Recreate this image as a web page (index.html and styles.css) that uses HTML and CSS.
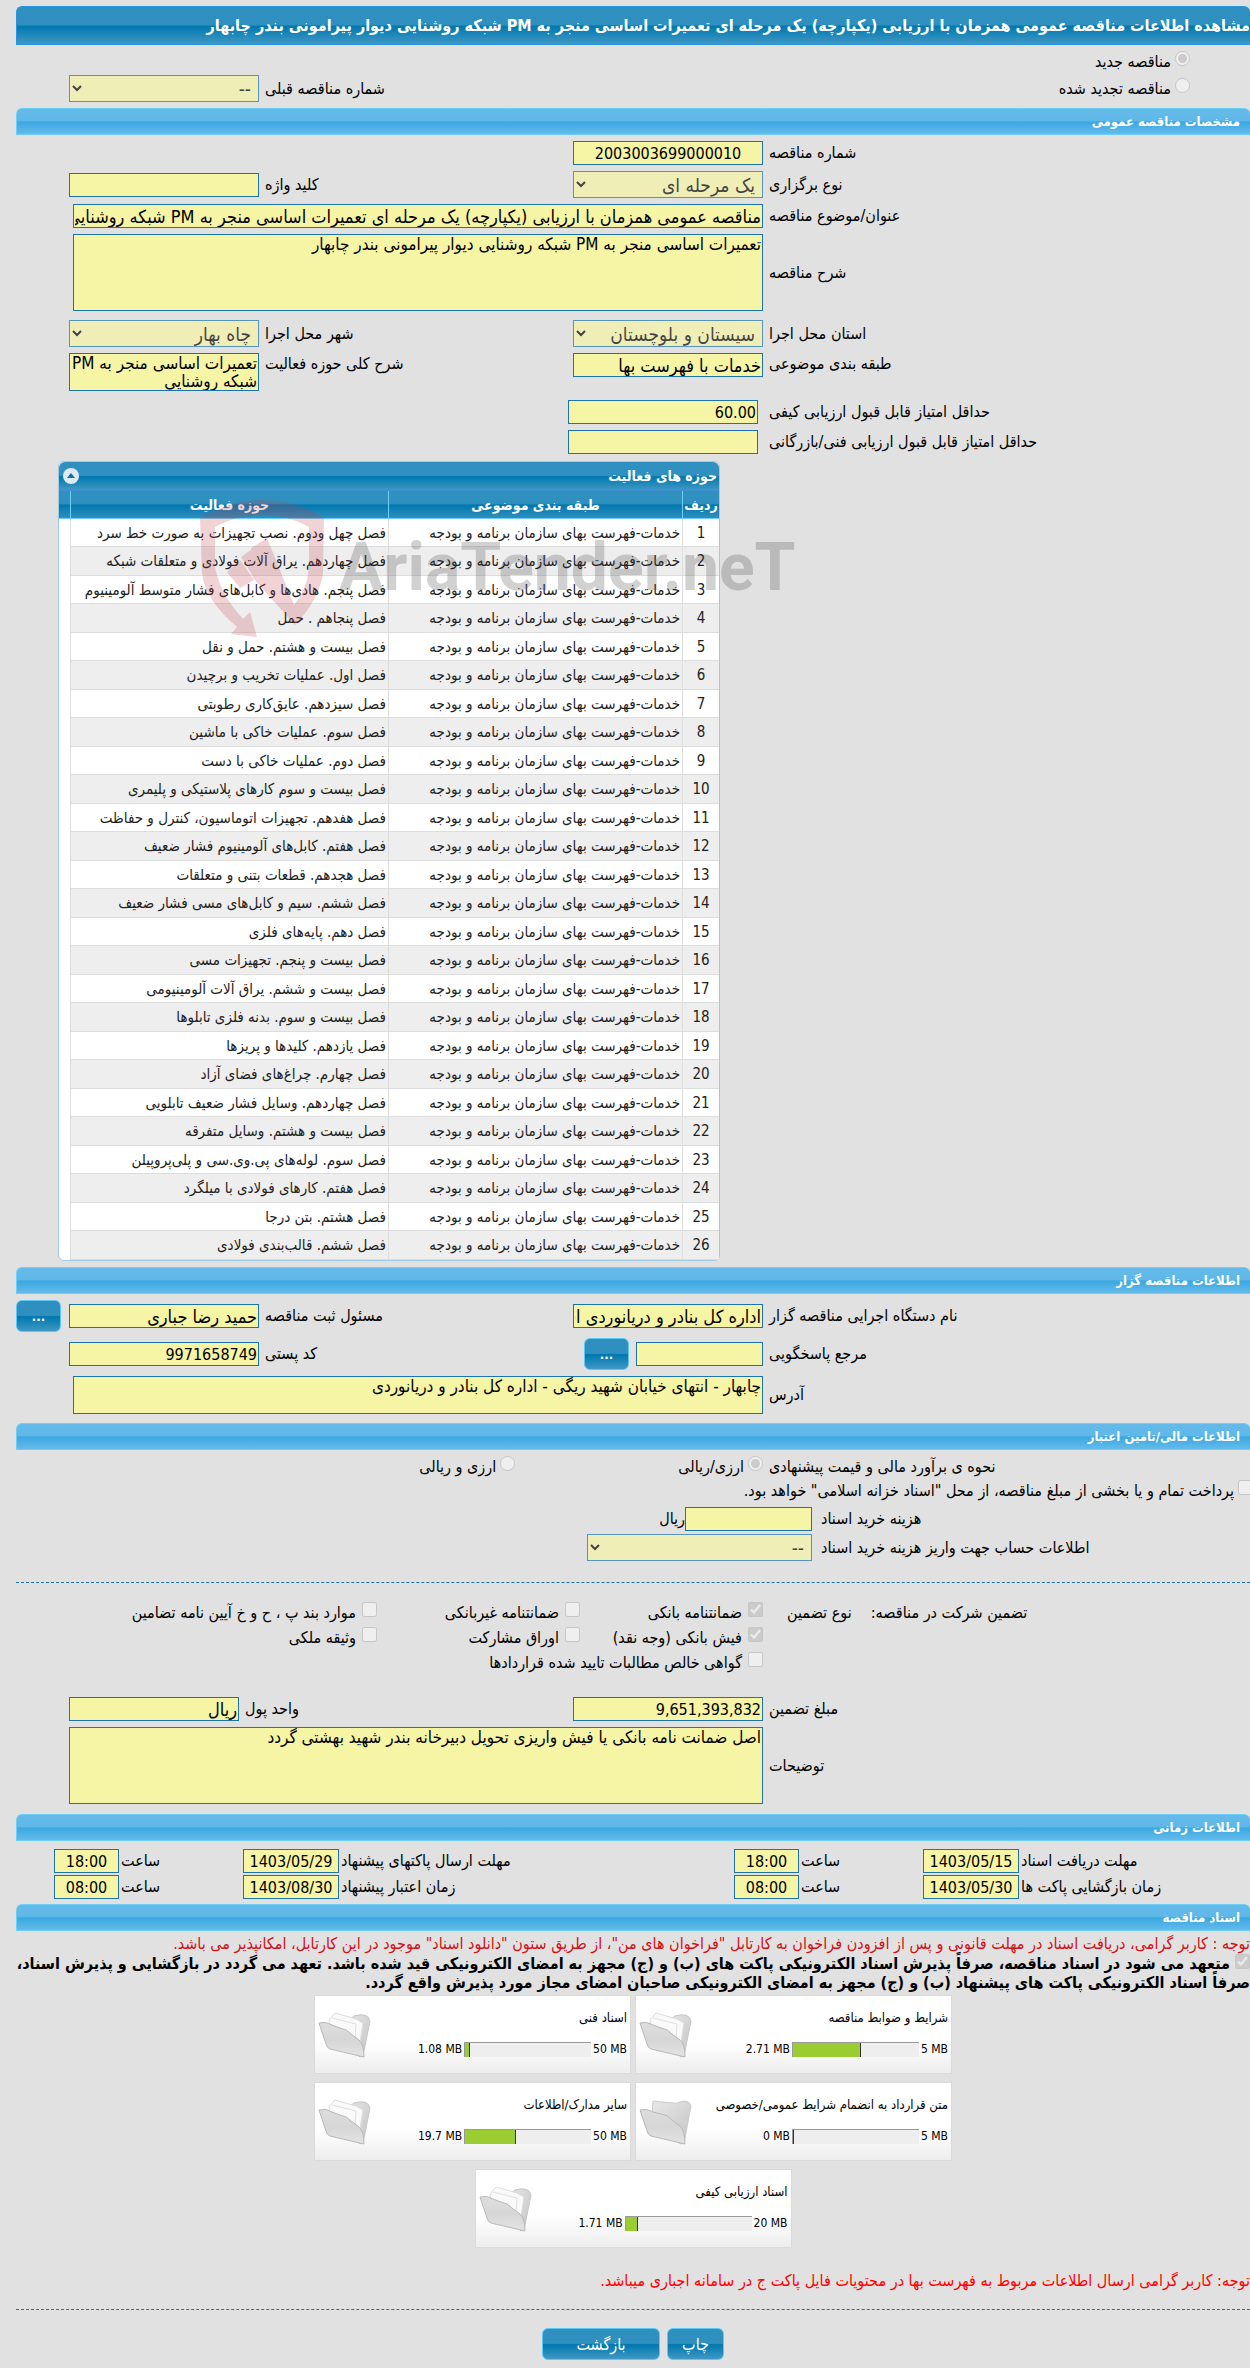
FILE: index.html
```html
<!DOCTYPE html>
<html lang="fa" dir="rtl">
<head>
    <meta charset="utf-8">
    <title>مشاهده اطلاعات مناقصه عمومی</title>
    <link rel="stylesheet" href="styles.css">
</head>

<body>
    <!-- shared folder shapes -->
    <svg class="defs" width="0" height="0">
        <defs>
            <linearGradient id="gBack" x1="0" y1="0" x2="1" y2="1">
                <stop offset="0" stop-color="#e8e8e8"/>
                <stop offset="1" stop-color="#c4c4c4"/>
            </linearGradient>
            <linearGradient id="gFront" x1="0" y1="0" x2="0" y2="1">
                <stop offset="0" stop-color="#dedede"/>
                <stop offset="0.5" stop-color="#d6d6d6"/>
                <stop offset="1" stop-color="#e4e4e4"/>
            </linearGradient>
        </defs>
        <symbol id="folder" viewBox="0 0 54 48">
            <path d="M14 3 L34 5 Q38 6 41 4 Q50 1 52 8 L46 40 Q45 46 42 46 L12 30 Z" fill="url(#gBack)" stroke="#cbcbcb"/>
            <path d="M1 12 Q8 10 14 14 L22 16 Q29 17 33 22 L41 28 Q46 32 46 46 L12 38 Q9 37 8 33 Z" fill="url(#gFront)" stroke="#b8b8b8"/>
        </symbol>
        <symbol id="folder-full" viewBox="0 0 54 48">
            <path d="M32 8 L36 5 Q50 1 52 10 L46 40 Q45 46 42 46 L24 30 Z" fill="url(#gBack)" stroke="#c6c6c6"/>
            <path d="M11 9 L17 2 L38 8 L45 12 L41 38 L12 20 Z" fill="#fafafa" stroke="#dcdcdc"/>
            <path d="M14 7 L38 13 L37 28" fill="none" stroke="#e0e0e0"/>
            <path d="M1 12 Q8 10 14 14 L22 17 Q29 18 33 23 L41 29 Q46 33 46 46 L12 38 Q9 37 8 33 Z" fill="url(#gFront)" stroke="#b8b8b8"/>
        </symbol>
    </svg>

    <main class="page">
        <h1 class="title-bar">مشاهده اطلاعات مناقصه عمومی همزمان با ارزیابی (یکپارچه) یک مرحله ای تعمیرات اساسی منجر به PM شبکه روشنایی دیوار پیرامونی بندر چابهار</h1>

        <section class="kind">
            <div class="kind-row">
                <label class="opt"><input type="radio" name="kind" checked disabled>مناقصه جدید</label>
            </div>
            <div class="kind-row">
                <label class="opt"><input type="radio" name="kind" disabled>مناقصه تجدید شده</label>
                <label class="lbl" for="prev">شماره مناقصه قبلی</label>
                <select id="prev" disabled><option>--</option></select>
            </div>
        </section>

        <h2 class="bar">مشخصات مناقصه عمومی</h2>
        <section class="form">
            <div class="row">
                <label class="lbl" for="num">شماره مناقصه</label>
                <input class="num center" id="num" type="text" value="2003003699000010" readonly>
            </div>
            <div class="row">
                <label class="lbl" for="type">نوع برگزاری</label>
                <select id="type" disabled><option>یک مرحله ای</option></select>
                <label class="lbl" for="key">کلید واژه</label>
                <input id="key" type="text" readonly>
            </div>
            <div class="row">
                <label class="lbl" for="subject">عنوان/موضوع مناقصه</label>
                <input class="wide" id="subject" type="text" value="مناقصه عمومی همزمان با ارزیابی (یکپارچه) یک مرحله ای تعمیرات اساسی منجر به PM شبکه روشنایی دیوار پیرامونی بندر چابهار" readonly>
            </div>
            <div class="row">
                <label class="lbl" for="desc">شرح مناقصه</label>
                <textarea class="wide tall" id="desc" readonly>تعمیرات اساسی منجر به PM شبکه روشنایی دیوار پیرامونی بندر چابهار</textarea>
            </div>
            <div class="row gap-top">
                <label class="lbl" for="province">استان محل اجرا</label>
                <select id="province" disabled><option>سیستان و بلوچستان</option></select>
                <label class="lbl" for="city">شهر محل اجرا</label>
                <select id="city" disabled><option>چاه بهار</option></select>
            </div>
            <div class="row top">
                <label class="lbl" for="cat">طبقه بندی موضوعی</label>
                <input id="cat" type="text" value="خدمات با فهرست بها" readonly>
                <label class="lbl" for="scope">شرح کلی حوزه فعالیت</label>
                <textarea id="scope" readonly>تعمیرات اساسی منجر به PM شبکه روشنایی</textarea>
            </div>
            <div class="row score gap-top">
                <label class="lbl" for="q1">حداقل امتیاز قابل قبول ارزیابی کیفی</label>
                <input class="num" id="q1" type="text" value="60.00" readonly>
            </div>
            <div class="row score">
                <label class="lbl" for="q2">حداقل امتیاز قابل قبول ارزیابی فنی/بازرگانی</label>
                <input class="num" id="q2" type="text" readonly>
            </div>
        </section>

        <section class="panel">
            <div class="panel-title">
                <h3>حوزه های فعالیت</h3>
                <button class="collapse" type="button" aria-label="بستن">
                    <svg viewBox="0 0 16 16" width="16" height="16"><circle cx="8" cy="8" r="8" fill="#dfe9f5"/><path d="M4 10 L8 5 L12 10 Z" fill="#0f6fa5"/></svg>
                </button>
            </div>
            <table class="grid">
                <colgroup><col class="c-num"><col class="c-cat"><col><col class="c-end"></colgroup>
                <thead>
                    <tr><th>ردیف</th><th>طبقه بندی موضوعی</th><th>حوزه فعالیت</th><th></th></tr>
                </thead>
                <tbody>
                    <tr><td>1</td><td>خدمات-فهرست بهای سازمان برنامه و بودجه</td><td>فصل چهل ودوم. نصب تجهیزات به صورت خط سرد</td><td></td></tr>
                    <tr><td>2</td><td>خدمات-فهرست بهای سازمان برنامه و بودجه</td><td>فصل چهاردهم. یراق آلات فولادی و متعلقات شبکه</td><td></td></tr>
                    <tr><td>3</td><td>خدمات-فهرست بهای سازمان برنامه و بودجه</td><td>فصل پنجم. هادی‌ها و کابل‌های فشار متوسط آلومینیوم</td><td></td></tr>
                    <tr><td>4</td><td>خدمات-فهرست بهای سازمان برنامه و بودجه</td><td>فصل پنجاهم . حمل</td><td></td></tr>
                    <tr><td>5</td><td>خدمات-فهرست بهای سازمان برنامه و بودجه</td><td>فصل بیست و هشتم. حمل و نقل</td><td></td></tr>
                    <tr><td>6</td><td>خدمات-فهرست بهای سازمان برنامه و بودجه</td><td>فصل اول. عملیات تخریب و برچیدن</td><td></td></tr>
                    <tr><td>7</td><td>خدمات-فهرست بهای سازمان برنامه و بودجه</td><td>فصل سیزدهم. عایق‌کاری رطوبتی</td><td></td></tr>
                    <tr><td>8</td><td>خدمات-فهرست بهای سازمان برنامه و بودجه</td><td>فصل سوم. عملیات خاکی با ماشین</td><td></td></tr>
                    <tr><td>9</td><td>خدمات-فهرست بهای سازمان برنامه و بودجه</td><td>فصل دوم. عملیات خاکی با دست</td><td></td></tr>
                    <tr><td>10</td><td>خدمات-فهرست بهای سازمان برنامه و بودجه</td><td>فصل بیست و سوم کارهای پلاستیکی و پلیمری</td><td></td></tr>
                    <tr><td>11</td><td>خدمات-فهرست بهای سازمان برنامه و بودجه</td><td>فصل هفدهم. تجهیزات اتوماسیون، کنترل و حفاظت</td><td></td></tr>
                    <tr><td>12</td><td>خدمات-فهرست بهای سازمان برنامه و بودجه</td><td>فصل هفتم. کابل‌های آلومینیوم فشار ضعیف</td><td></td></tr>
                    <tr><td>13</td><td>خدمات-فهرست بهای سازمان برنامه و بودجه</td><td>فصل هجدهم. قطعات بتنی و متعلقات</td><td></td></tr>
                    <tr><td>14</td><td>خدمات-فهرست بهای سازمان برنامه و بودجه</td><td>فصل ششم. سیم و کابل‌های مسی فشار ضعیف</td><td></td></tr>
                    <tr><td>15</td><td>خدمات-فهرست بهای سازمان برنامه و بودجه</td><td>فصل دهم. پایه‌های فلزی</td><td></td></tr>
                    <tr><td>16</td><td>خدمات-فهرست بهای سازمان برنامه و بودجه</td><td>فصل بیست و پنجم. تجهیزات مسی</td><td></td></tr>
                    <tr><td>17</td><td>خدمات-فهرست بهای سازمان برنامه و بودجه</td><td>فصل بیست و ششم. یراق آلات آلومینیومی</td><td></td></tr>
                    <tr><td>18</td><td>خدمات-فهرست بهای سازمان برنامه و بودجه</td><td>فصل بیست و سوم. بدنه فلزی تابلوها</td><td></td></tr>
                    <tr><td>19</td><td>خدمات-فهرست بهای سازمان برنامه و بودجه</td><td>فصل یازدهم. کلیدها و پریزها</td><td></td></tr>
                    <tr><td>20</td><td>خدمات-فهرست بهای سازمان برنامه و بودجه</td><td>فصل چهارم. چراغ‌های فضای آزاد</td><td></td></tr>
                    <tr><td>21</td><td>خدمات-فهرست بهای سازمان برنامه و بودجه</td><td>فصل چهاردهم. وسایل فشار ضعیف تابلویی</td><td></td></tr>
                    <tr><td>22</td><td>خدمات-فهرست بهای سازمان برنامه و بودجه</td><td>فصل بیست و هشتم. وسایل متفرقه</td><td></td></tr>
                    <tr><td>23</td><td>خدمات-فهرست بهای سازمان برنامه و بودجه</td><td>فصل سوم. لوله‌های پی.وی.سی و پلی‌پروپیلن</td><td></td></tr>
                    <tr><td>24</td><td>خدمات-فهرست بهای سازمان برنامه و بودجه</td><td>فصل هفتم. کارهای فولادی با میلگرد</td><td></td></tr>
                    <tr><td>25</td><td>خدمات-فهرست بهای سازمان برنامه و بودجه</td><td>فصل هشتم. بتن درجا</td><td></td></tr>
                    <tr><td>26</td><td>خدمات-فهرست بهای سازمان برنامه و بودجه</td><td>فصل ششم. قالب‌بندی فولادی</td><td></td></tr>
                </tbody>
            </table>
            <!-- watermark over the table -->
            <div class="mark" dir="ltr">
                <svg viewBox="0 0 125 140" width="125" height="140">
                    <g fill="#c83c46">
                        <path d="M0 20 Q30 2 62 2 Q95 2 124 20 L123 75 Q119 102 95 127 L53 80 L51 50 L67 40 L94 107 Q107 92 109 70 L109 29 Q88 17 62 17 Q36 17 15 29 L15 69 Q20 96 43 121 L50 114 L57 139 L31 136 L37 129 Q5 102 2 75 Z"/>
                        <path d="M27 74 L40 62 L54 82 L40 90 Z M41 59 L52 51 L70 72 L54 80 Z"/>
                    </g>
                </svg>
                <span>AriaTender.neT</span>
            </div>
        </section>

        <h2 class="bar">اطلاعات مناقصه گزار</h2>
        <section class="form owner">
            <div class="row">
                <label class="lbl" for="org">نام دستگاه اجرایی مناقصه گزار</label>
                <input id="org" type="text" value="اداره کل بنادر و دریانوردی استان سیستان و بلوچستان" readonly>
                <label class="lbl" for="resp">مسئول ثبت مناقصه</label>
                <input id="resp" type="text" value="حمید رضا جباری" readonly>
                <button class="btn dots" type="button">...</button>
            </div>
            <div class="row">
                <label class="lbl" for="ref">مرجع پاسخگویی</label>
                <div class="pair">
                    <input id="ref" type="text" readonly>
                    <button class="btn dots" type="button">...</button>
                </div>
                <label class="lbl" for="zip">کد پستی</label>
                <input class="num" id="zip" type="text" value="9971658749" readonly>
            </div>
            <div class="row">
                <label class="lbl" for="addr">آدرس</label>
                <textarea class="wide" id="addr" readonly>چابهار - انتهای خیابان شهید ریگی - اداره کل بنادر و دریانوردی</textarea>
            </div>
        </section>

        <h2 class="bar">اطلاعات مالی/تامین اعتبار</h2>
        <section class="money">
            <div class="row top">
                <span class="lbl">نحوه ی برآورد مالی و قیمت پیشنهادی</span>
                <div class="currency">
                    <label class="opt"><input type="radio" name="cur" checked disabled>ارزی/ریالی</label>
                    <label class="opt"><input type="radio" name="cur" disabled>ارزی و ریالی</label>
                </div>
            </div>
            <label class="opt treasury"><input type="checkbox" disabled>پرداخت تمام و یا بخشی از مبلغ مناقصه، از محل "اسناد خزانه اسلامی" خواهد بود.</label>
            <div class="cost">
                <label class="lbl" for="fee">هزینه خرید اسناد</label>
                <div class="fee"><input id="fee" type="text" readonly><span>ریال</span></div>
            </div>
            <div class="cost">
                <label class="lbl" for="acc">اطلاعات حساب جهت واریز هزینه خرید اسناد</label>
                <select id="acc" disabled><option>--</option></select>
            </div>
        </section>

        <hr class="dash">

        <section class="guarantee">
            <div class="g-head">
                <span>تضمین شرکت در مناقصه:</span>
                <span>نوع تضمین</span>
            </div>
            <div class="g-list">
                <label class="opt"><input type="checkbox" checked disabled>ضمانتنامه بانکی</label>
                <label class="opt"><input type="checkbox" disabled>ضمانتنامه غیربانکی</label>
                <label class="opt"><input type="checkbox" disabled>موارد بند پ ، ح و خ آیین نامه تضامین</label>
                <label class="opt"><input type="checkbox" checked disabled>فیش بانکی (وجه نقد)</label>
                <label class="opt"><input type="checkbox" disabled>اوراق مشارکت</label>
                <label class="opt"><input type="checkbox" disabled>وثیقه ملکی</label>
                <label class="opt all"><input type="checkbox" disabled>گواهی خالص مطالبات تایید شده قراردادها</label>
            </div>
        </section>
        <section class="form notes">
            <div class="row unit">
                <label class="lbl" for="amount">مبلغ تضمین</label>
                <input class="num" id="amount" type="text" value="9,651,393,832" readonly>
                <label class="lbl" for="unit">واحد پول</label>
                <input id="unit" type="text" value="ریال" readonly>
            </div>
            <div class="row">
                <label class="lbl" for="note">توضیحات</label>
                <textarea class="wide tall" id="note" readonly>اصل ضمانت نامه بانکی یا فیش واریزی تحویل دبیرخانه بندر شهید بهشتی گردد</textarea>
            </div>
        </section>

        <h2 class="bar">اطلاعات زمانی</h2>
        <section class="times">
            <div class="time">
                <label class="lbl" for="d1">مهلت دریافت اسناد</label>
                <input class="num" id="d1" type="text" value="1403/05/15" readonly>
                <label class="lbl" for="t1">ساعت</label>
                <input class="num" id="t1" type="text" value="18:00" readonly>
            </div>
            <div class="time">
                <label class="lbl" for="d2">مهلت ارسال پاکتهای پیشنهاد</label>
                <input class="num" id="d2" type="text" value="1403/05/29" readonly>
                <label class="lbl" for="t2">ساعت</label>
                <input class="num" id="t2" type="text" value="18:00" readonly>
            </div>
            <div class="time">
                <label class="lbl" for="d3">زمان بازگشایی پاکت ها</label>
                <input class="num" id="d3" type="text" value="1403/05/30" readonly>
                <label class="lbl" for="t3">ساعت</label>
                <input class="num" id="t3" type="text" value="08:00" readonly>
            </div>
            <div class="time">
                <label class="lbl" for="d4">زمان اعتبار پیشنهاد</label>
                <input class="num" id="d4" type="text" value="1403/08/30" readonly>
                <label class="lbl" for="t4">ساعت</label>
                <input class="num" id="t4" type="text" value="08:00" readonly>
            </div>
        </section>

        <h2 class="bar">اسناد مناقصه</h2>
        <p class="warn">توجه : کاربر گرامی، دریافت اسناد در مهلت قانونی و پس از افزودن فراخوان به کارتابل "فراخوان های من"، از طریق ستون "دانلود اسناد" موجود در این کارتابل، امکانپذیر می باشد.</p>
        <label class="commit"><input type="checkbox" checked disabled>متعهد می شود در اسناد مناقصه، صرفاً پذیرش اسناد الکترونیکی پاکت های (ب) و (ج) مجهز به امضای الکترونیکی قید شده باشد. تعهد می گردد در بازگشایی و پذیرش اسناد،<br>صرفاً اسناد الکترونیکی پاکت های پیشنهاد (ب) و (ج) مجهز به امضای الکترونیکی صاحبان امضای مجاز مورد پذیرش واقع گردد.</label>

        <section class="docs">
            <article class="doc">
                <h4>شرایط و ضوابط مناقصه</h4>
                <div class="size"><span>5 MB</span><div class="meter"><div class="fill" style="width:54.2%"></div></div><span>2.71 MB</span></div>
                <svg class="folder"><use href="#folder-full"/></svg>
            </article>
            <article class="doc">
                <h4>اسناد فنی</h4>
                <div class="size"><span>50 MB</span><div class="meter"><div class="fill" style="width:4%"></div></div><span>1.08 MB</span></div>
                <svg class="folder"><use href="#folder-full"/></svg>
            </article>
            <article class="doc">
                <h4>متن قرارداد به انضمام شرایط عمومی/خصوصی</h4>
                <div class="size"><span>5 MB</span><div class="meter"><div class="fill" style="width:0%"></div></div><span>0 MB</span></div>
                <svg class="folder"><use href="#folder"/></svg>
            </article>
            <article class="doc">
                <h4>سایر مدارک/اطلاعات</h4>
                <div class="size"><span>50 MB</span><div class="meter"><div class="fill" style="width:40%"></div></div><span>19.7 MB</span></div>
                <svg class="folder"><use href="#folder-full"/></svg>
            </article>
            <article class="doc">
                <h4>اسناد ارزیابی کیفی</h4>
                <div class="size"><span>20 MB</span><div class="meter"><div class="fill" style="width:10%"></div></div><span>1.71 MB</span></div>
                <svg class="folder"><use href="#folder-full"/></svg>
            </article>
        </section>

        <p class="warn last">توجه: کاربر گرامی ارسال اطلاعات مربوط به فهرست بها در محتویات فایل پاکت ج در سامانه اجباری میباشد.</p>
        <hr class="dash">
        <div class="actions">
            <button class="btn" type="button">چاپ</button>
            <button class="btn back" type="button">بازگشت</button>
        </div>
    </main>
</body>

</html>
```
FILE: styles.css
```css
* {
    box-sizing: border-box;
}

body {
    margin: 0;
    background: #e1e1e1;
    color: #000;
    font-family: "DejaVu Sans Condensed", "DejaVu Sans", Tahoma, sans-serif;
    font-size: 16px;
    line-height: 22px;
}

.defs {
    position: absolute;
}

.page {
    padding: 6px 0 6px 16px;
    overflow: hidden;
}

h1, h2, h3, h4, p {
    margin: 0;
}

/* bars */
.title-bar {
    height: 39px;
    line-height: 37px;
    border: 1px solid #2a93df;
    border-right: none;
    border-radius: 6px 6px 0 0;
    background: linear-gradient(#3090bf 0%, #2f8fbe 48%, #0078b0 52%, #3f98c4 100%);
    color: #fff;
    font-size: 16px;
    white-space: nowrap;
}

.bar {
    height: 27px;
    line-height: 26px;
    padding: 0 10px;
    border: 1px solid #6dcff6;
    border-right: none;
    border-radius: 6px 6px 0 0;
    background: linear-gradient(#64bbea 0%, #60b8e8 46%, #3ba8e2 52%, #64bbea 100%);
    color: #fff;
    font-size: 13px;
}

/* fields */
input[type="text"], textarea, select {
    width: 100%;
    height: 24px;
    margin: 0;
    padding: 0 1px;
    border: 1px solid #1c74aa;
    border-radius: 0;
    background: #f6f4a5;
    color: #000;
    font-family: inherit;
    font-size: 18px;
    outline: none;
}

input[type="text"].num {
    font-size: 16px;
}

select {
    height: 27px;
    padding: 0 3px;
    font-size: 19px;
}

textarea {
    display: block;
    height: 38px;
    font-size: 17px;
    line-height: 18px;
    overflow: hidden;
    resize: none;
}

input.center {
    text-align: center;
}

input[type="radio"], input[type="checkbox"] {
    width: 15px;
    height: 15px;
    margin: 0;
    flex: none;
}

.opt {
    display: flex;
    align-items: flex-start;
    gap: 4px;
    white-space: nowrap;
}

.lbl {
    padding-left: 6px;
    text-align: left;
    white-space: nowrap;
}

/* label / field / label / field / side column */
.row, .kind-row {
    display: grid;
    grid-template-columns: 487fr 190px 314fr 190px 53px;
    align-items: center;
}

.form .wide {
    grid-column: 2 / 5;
    width: calc(100% - 4px);
}

.form .tall {
    height: 77px;
}

.kind {
    padding: 6px 0;
}

.kind-row:first-child {
    height: 24px;
    align-items: start;
}

.kind-row .opt {
    padding-right: 60px;
}

.kind-row .lbl {
    grid-column: 3;
}

.form {
    display: flex;
    flex-direction: column;
    gap: 6px;
    padding: 6px 0 7px;
}

.gap-top {
    margin-top: 3px;
}

.row.top {
    align-items: start;
}

.row.score {
    grid-template-columns: 492fr 190px 552fr;
}

.row.score .lbl {
    padding-left: 11px;
}

/* activity table */
.panel {
    position: relative;
    margin: 0 530px 6px 42px;
    border: 1px solid #a3c8e2;
    border-radius: 6px;
    background: #fff;
}

.panel-title {
    display: flex;
    justify-content: space-between;
    align-items: center;
    height: 29px;
    padding: 0 2px 0 4px;
    border-bottom: 1px solid #3d8fd2;
    border-radius: 6px 6px 0 0;
    background: linear-gradient(#3090bf 0%, #2f8fbe 48%, #0078b0 52%, #3f98c4 100%);
    color: #fff;
}

.panel-title h3 {
    font-size: 14px;
}

.collapse {
    width: 16px;
    height: 16px;
    padding: 0;
    border: none;
    background: none;
    line-height: 0;
}

.grid {
    width: 100%;
    table-layout: fixed;
    border-collapse: separate;
    border-spacing: 0;
    font-size: 15px;
    line-height: 20px;
}

.c-num {
    width: 37px;
}

.c-cat {
    width: 294px;
}

.c-end {
    width: 11px;
}

.grid th {
    height: 28px;
    padding: 0;
    border-left: 1px solid #6dcff6;
    border-bottom: 1px solid #6dcff6;
    background: linear-gradient(#3090bf 0%, #2f8fbe 46%, #0078b0 52%, #2f8fbe 100%);
    color: #fff;
    font-size: 14px;
    white-space: nowrap;
}

.grid td {
    height: 28px;
    padding: 0 2px;
    border-left: 1px solid #ddd;
    border-bottom: 1px solid #ddd;
    color: #222;
    white-space: nowrap;
}

.grid tbody tr:nth-child(even) td {
    height: 29px;
    background: #eee;
}

.grid td:first-child {
    text-align: center;
}

.grid th:last-child {
    border-left: none;
}

.grid tbody tr td:last-child, .grid tbody tr:nth-child(even) td:last-child {
    border: none;
    border-radius: 0 0 0 6px;
    background: #fff;
}

.mark {
    position: absolute;
    top: 36px;
    left: 141px;
    display: flex;
    align-items: center;
    gap: 14px;
    opacity: 0.22;
    pointer-events: none;
}

.mark span {
    color: #333;
    font-family: Roboto, sans-serif;
    font-size: 66px;
    font-weight: bold;
    line-height: 80px;
}

/* buttons */
.btn {
    min-width: 57px;
    height: 32px;
    padding: 0 14px;
    border: 1px solid #5cc8f5;
    border-radius: 6px;
    background: linear-gradient(#2f8fbe 0%, #2f8fbe 48%, #0078b0 52%, #3f98c4 100%);
    color: #fff;
    font-family: inherit;
    font-size: 16px;
}

.btn.dots {
    width: 45px;
    min-width: 0;
    padding: 0;
    font-size: 13px;
    font-weight: bold;
}

.owner .dots {
    justify-self: end;
}

.pair {
    display: flex;
    align-items: center;
    gap: 7px;
}

.pair input[type="text"] {
    width: 127px;
}

.owner {
    padding-bottom: 9px;
}

/* money */
.money {
    padding: 6px 0 18px;
}

.currency {
    grid-column: 2 / 5;
    display: flex;
    gap: 163px;
}

.treasury {
    margin: 2px -3px 5px 0;
}

.cost {
    display: grid;
    grid-template-columns: 438fr 225px 571fr;
    align-items: center;
    margin-bottom: 3px;
}

.cost .lbl {
    padding-left: 9px;
}

.fee {
    display: flex;
    align-items: center;
}

.fee input[type="text"] {
    width: 127px;
}

.dash {
    margin: 0;
    border: none;
    border-top: 1px dashed #1c74aa;
}

/* guarantee */
.guarantee {
    display: grid;
    grid-template-columns: 487fr 747fr;
    padding: 19px 0 23px;
}

.g-head {
    display: flex;
    justify-content: flex-end;
    gap: 19px;
    padding-left: 24px;
}

.g-list {
    display: grid;
    grid-template-columns: 183px 203px 1fr;
    row-gap: 3px;
}

.g-list .opt {
    gap: 6px;
}

.g-list .all {
    grid-column: 1 / 4;
}

.notes {
    padding: 0 0 10px;
}

.notes .wide {
    width: 100%;
}

.row.unit {
    grid-template-columns: 487fr 190px 334fr 170px 53px;
}

/* times */
.times {
    display: grid;
    grid-template-columns: 554fr 680fr;
    row-gap: 2px;
    padding: 8px 0 5px;
}

.time {
    display: grid;
    grid-template-columns: 1fr 96px 124px 65px 38px;
    align-items: center;
}

.time .lbl {
    padding-left: 2px;
}

.time input {
    text-align: center;
}

/* documents */
.warn {
    padding-top: 3px;
    color: #d40f16;
    line-height: 20px;
}

.commit {
    display: block;
    font-size: 16px;
    font-weight: bold;
    line-height: 19px;
    white-space: nowrap;
}

.commit input[type="checkbox"] {
    margin-left: 5px;
    vertical-align: top;
}

.docs {
    display: grid;
    grid-template-columns: 317px 317px;
    justify-content: center;
    gap: 8px 4px;
    margin-top: 3px;
}

.doc {
    display: grid;
    grid-template-columns: 1fr 60px;
    grid-template-rows: 43px 34px;
    padding: 0 3px;
    border: 1px solid #dadada;
    background: linear-gradient(#fff 60%, #ededed);
    font-size: 12px;
    line-height: 20px;
}

.doc:last-child {
    grid-column: 1 / 3;
    justify-self: center;
    width: 317px;
}

.doc h4 {
    grid-column: 1 / 3;
    grid-row: 1;
    padding-top: 12px;
    font-size: 13px;
    font-weight: normal;
}

.doc .folder {
    grid-column: 2;
    grid-row: 1 / 3;
    align-self: center;
    justify-self: end;
    width: 54px;
    height: 48px;
}

.size {
    grid-column: 1;
    grid-row: 2;
    display: flex;
    gap: 2px;
}

.size span {
    direction: ltr;
}

.meter {
    display: flex;
    justify-content: flex-end;
    width: 127px;
    height: 15px;
    margin-top: 3px;
    border-top: 1px solid #999;
    border-left: 1px solid #999;
    background: #eee;
}

.fill {
    border-right: 1px solid #333;
    background: #9acd32;
}

.last {
    padding-top: 23px;
    color: #f00;
}

.last + .dash {
    margin-top: 18px;
}

.actions {
    display: flex;
    justify-content: center;
    gap: 7px;
    padding-top: 18px;
}

.btn.back {
    min-width: 118px;
}
```
